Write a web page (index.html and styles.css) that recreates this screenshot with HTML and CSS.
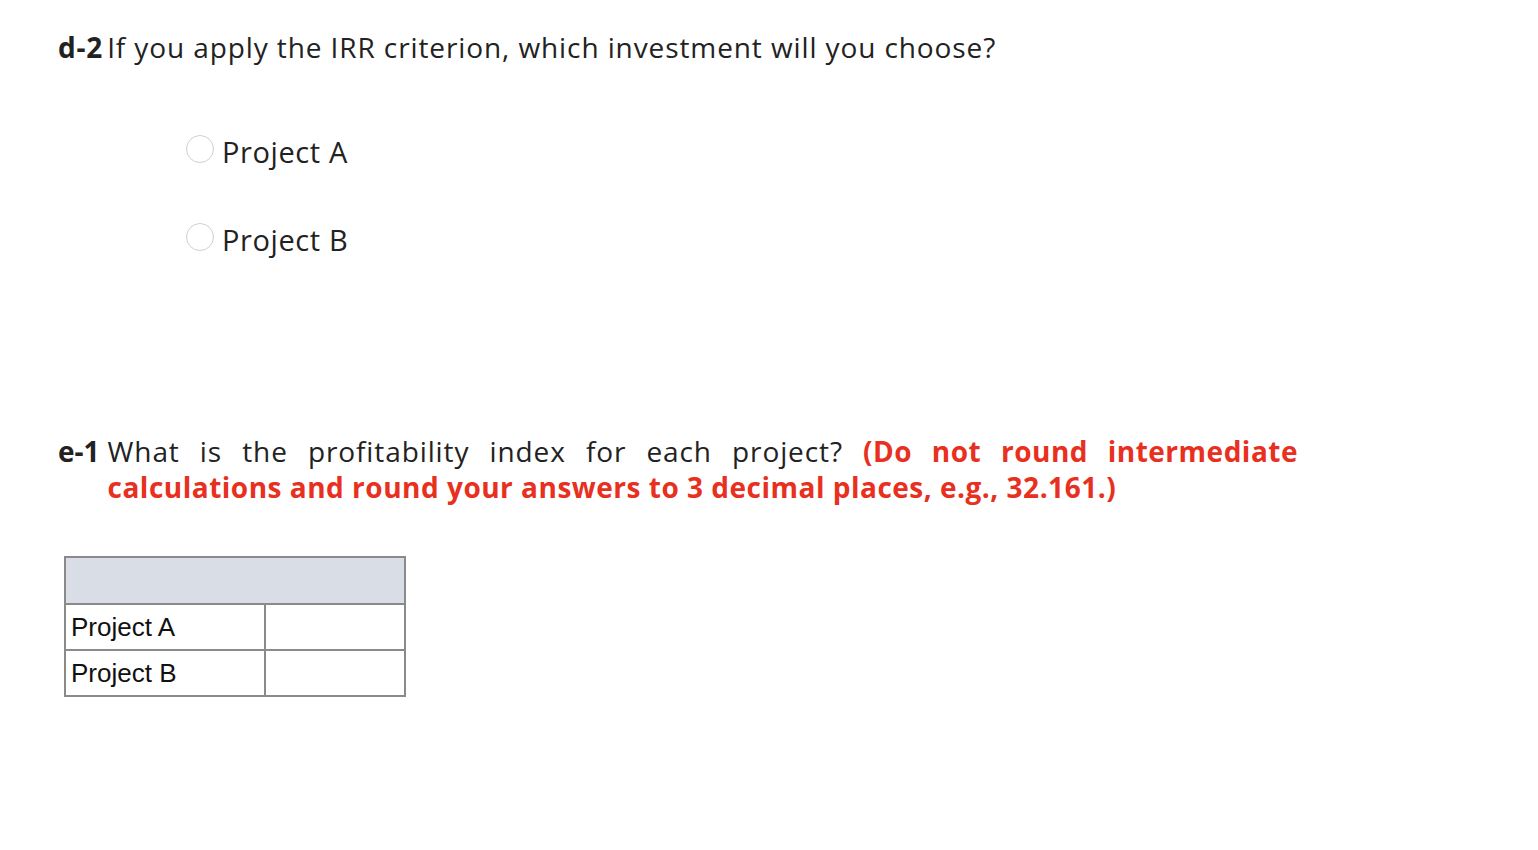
FILE: index.html
```html
<!DOCTYPE html>
<html>
<head>
<meta charset="utf-8">
<link rel="stylesheet" href="styles.css">
</head>
<body>
<div class="page">
  <div class="question q-d2">
    <span class="qnum">d-2</span><span class="qtext">If you apply the IRR criterion, which investment will you choose?</span>
  </div>
  <div class="options">
    <label class="option"><span class="radio"></span><span class="opt-text">Project A</span></label>
    <label class="option"><span class="radio"></span><span class="opt-text">Project B</span></label>
  </div>
  <div class="question q-e1">
    <span class="qnum">e-1</span>
    <span class="qtext justify">What is the profitability index for each project? <b class="red">(Do not round intermediate calculations and round your answers to 3 decimal places, e.g., 32.161.)</b></span>
  </div>
  <table class="grid">
    <tr class="head"><td colspan="2"></td></tr>
    <tr><td class="lbl">Project A</td><td class="val"></td></tr>
    <tr><td class="lbl">Project B</td><td class="val"></td></tr>
  </table>
</div>
</body>
</html>
```
FILE: styles.css
```css
html, body { margin: 0; padding: 0; background: #fff; }
body { font-family: "Open Sans", "Noto Sans", sans-serif; color: #222; }
.page { padding: 29px 0 0 58px; width: 1240px; }
.question { display: flex; font-size: 28px; line-height: 36px; letter-spacing: 0.9px; }
.qnum { font-weight: 700; flex: none; margin-right: 4px; letter-spacing: 0.8px; }
.q-e1 .qnum { margin-right: 8px; letter-spacing: 0; }
.qtext { flex: 1; }
.justify { text-align: justify; }
.red { color: #e8301f; font-weight: 700; letter-spacing: 0.5px; }
.options { padding: 68px 0 0 128px; display: flex; flex-direction: column; gap: 52px; }
.option { display: flex; align-items: center; gap: 8px; font-size: 29px; height: 36px; letter-spacing: 0.6px; }
.radio { width: 28px; height: 28px; border: 1px solid #cfcfcf; border-radius: 50%; box-sizing: border-box; margin-top: -5px; }
.q-e1 { margin-top: 176px; }
.grid { margin: 51px 0 0 6px; border-collapse: collapse; font-family: "Liberation Sans", Arial, sans-serif; font-size: 26px; color: #111; }
.grid td { border: 2px solid #8a8a8a; height: 44px; padding: 0 5px; }
.grid .head td { height: 45px; background: #d9dde6; }
.grid .lbl { width: 188px; }
.grid .val { width: 128px; }
```
